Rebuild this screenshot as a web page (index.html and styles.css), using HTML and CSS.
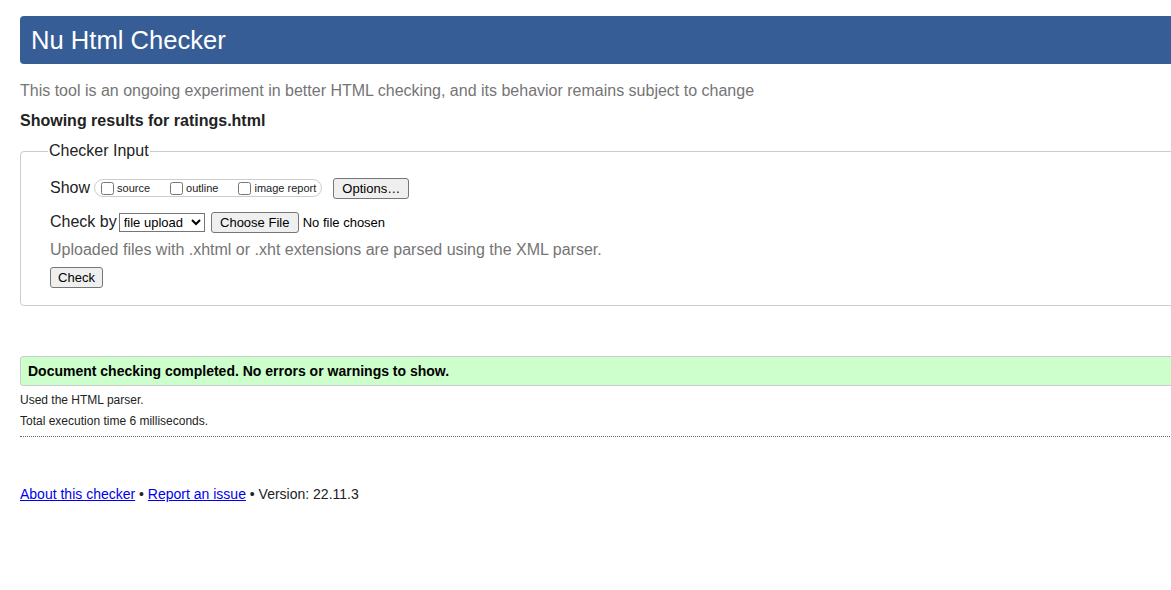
FILE: index.html
```html
<!DOCTYPE html>
<html lang="en">
<head>
<meta charset="utf-8">
<title>Nu Html Checker</title>
<link rel="stylesheet" href="styles.css">
</head>
<body>
<div class="page">
  <h1 class="banner">Nu Html Checker</h1>
  <p class="intro">This tool is an ongoing experiment in better HTML checking, and its behavior remains subject to change</p>
  <p class="showing">Showing results for ratings.html</p>
  <fieldset class="input">
    <legend class="legend">Checker Input</legend>
    <div class="row row-show">
      <span class="label">Show</span>
      <span class="pill">
        <label class="opt"><input type="checkbox" class="cb">source</label>
        <label class="opt"><input type="checkbox" class="cb">outline</label>
        <label class="opt"><input type="checkbox" class="cb">image report</label>
      </span>
      <button class="btn btn-options">Options…</button>
    </div>
    <div class="row row-check">
      <span class="label">Check by</span>
      <select class="sel"><option>file upload</option></select>
      <button class="btn btn-file">Choose File</button>
      <span class="nofile">No file chosen</span>
    </div>
    <p class="hint">Uploaded files with .xhtml or .xht extensions are parsed using the XML parser.</p>
    <div class="row row-submit"><button class="btn btn-check">Check</button></div>
  </fieldset>
  <p class="success">Document checking completed. No errors or warnings to show.</p>
  <p class="stat">Used the HTML parser.</p>
  <p class="stat">Total execution time 6 milliseconds.</p>
  <hr class="sep">
  <p class="footer"><a href="#">About this checker</a> • <a href="#">Report an issue</a> • Version: 22.11.3</p>
</div>
</body>
</html>
```
FILE: styles.css
```css
html, body {
  margin: 0;
  padding: 0;
  overflow: hidden;
  background: #fff;
}
body {
  font-family: "Liberation Sans", Arial, sans-serif;
  color: #222;
}
.page {
  width: 1190px;
  padding: 16px 0 0 20px;
}
.banner {
  margin: 0;
  height: 48px;
  line-height: 48px;
  padding-left: 11px;
  background: #365d95;
  color: #fff;
  font-size: 25.6px;
  font-weight: normal;
  border-radius: 4px 0 0 4px;
}
.intro {
  margin: 18px 0 0;
  font-size: 16px;
  line-height: 18px;
  color: #757575;
}
.showing {
  margin: 12px 0 0;
  font-size: 16px;
  line-height: 18px;
  font-weight: bold;
  color: #222;
}
.input {
  margin: 12px 0 0;
  padding: 17px 29px 17px;
  border: 1px solid #ccc;
  border-radius: 4px 0 0 4px;
  min-width: 0;
}
.legend {
  padding: 0 1px;
  margin-left: -2px;
  font-size: 16px;
  line-height: 18px;
  color: #222;
}
.row {
  display: flex;
  align-items: center;
}
.label {
  font-size: 16px;
  color: #222;
}
.row-show {
  height: 22px;
}
.row-show .label {
  margin-right: 4px;
}
.pill {
  display: inline-flex;
  align-items: center;
  height: 16px;
  padding: 0 5px 0 2px;
  border: 1px solid #ccc;
  border-radius: 9px;
  margin-right: 11px;
}
.opt {
  display: inline-flex;
  align-items: center;
  font-size: 11px;
  margin-right: 16px;
}
.opt:last-child {
  margin-right: 0;
}
.cb {
  margin: 0 3px 0 4px;
  width: 13px;
  height: 13px;
}
.btn {
  font-family: "Liberation Sans", Arial, sans-serif;
  font-size: 13px;
  color: #000;
  background: #efefef;
  border: 1px solid #767676;
  border-radius: 3px;
  padding: 1px 6px;
  height: 21px;
}
.btn-options {
  width: 76px;
}
.row-check {
  margin-top: 12px;
  height: 22px;
}
.row-check .label {
  margin-right: 2px;
}
.sel {
  font-family: "Liberation Sans", Arial, sans-serif;
  font-size: 13px;
  height: 19px;
  width: 86px;
  border: 1px solid #767676;
  border-radius: 0;
  background: #fff;
  margin-right: 6px;
  padding: 0;
}
.btn-file {
  width: 88px;
  margin-right: 4px;
}
.nofile {
  font-size: 13px;
  color: #000;
}
.hint {
  margin: 8px 0 0;
  font-size: 16px;
  line-height: 18px;
  color: #757575;
}
.row-submit {
  margin-top: 8px;
}
.btn-check {
  width: 53px;
}
.success {
  margin: 50px 0 0;
  height: 28px;
  line-height: 28px;
  padding-left: 7px;
  background: #ccffcc;
  border: 1px solid #ccc;
  border-radius: 3px 0 0 3px;
  font-size: 14px;
  font-weight: bold;
  color: #000;
}
.stat {
  margin: 7px 0 0;
  font-size: 12px;
  line-height: 14px;
  color: #222;
}
.stat + .stat {
  margin-top: 7px;
}
.sep {
  margin: 8px 0 0;
  border: 0;
  border-top: 1px dotted #666;
  height: 0;
}
.footer {
  margin: 49px 0 0;
  font-size: 14px;
  line-height: 16px;
  color: #222;
}
.footer a {
  color: #0000ee;
}
```
